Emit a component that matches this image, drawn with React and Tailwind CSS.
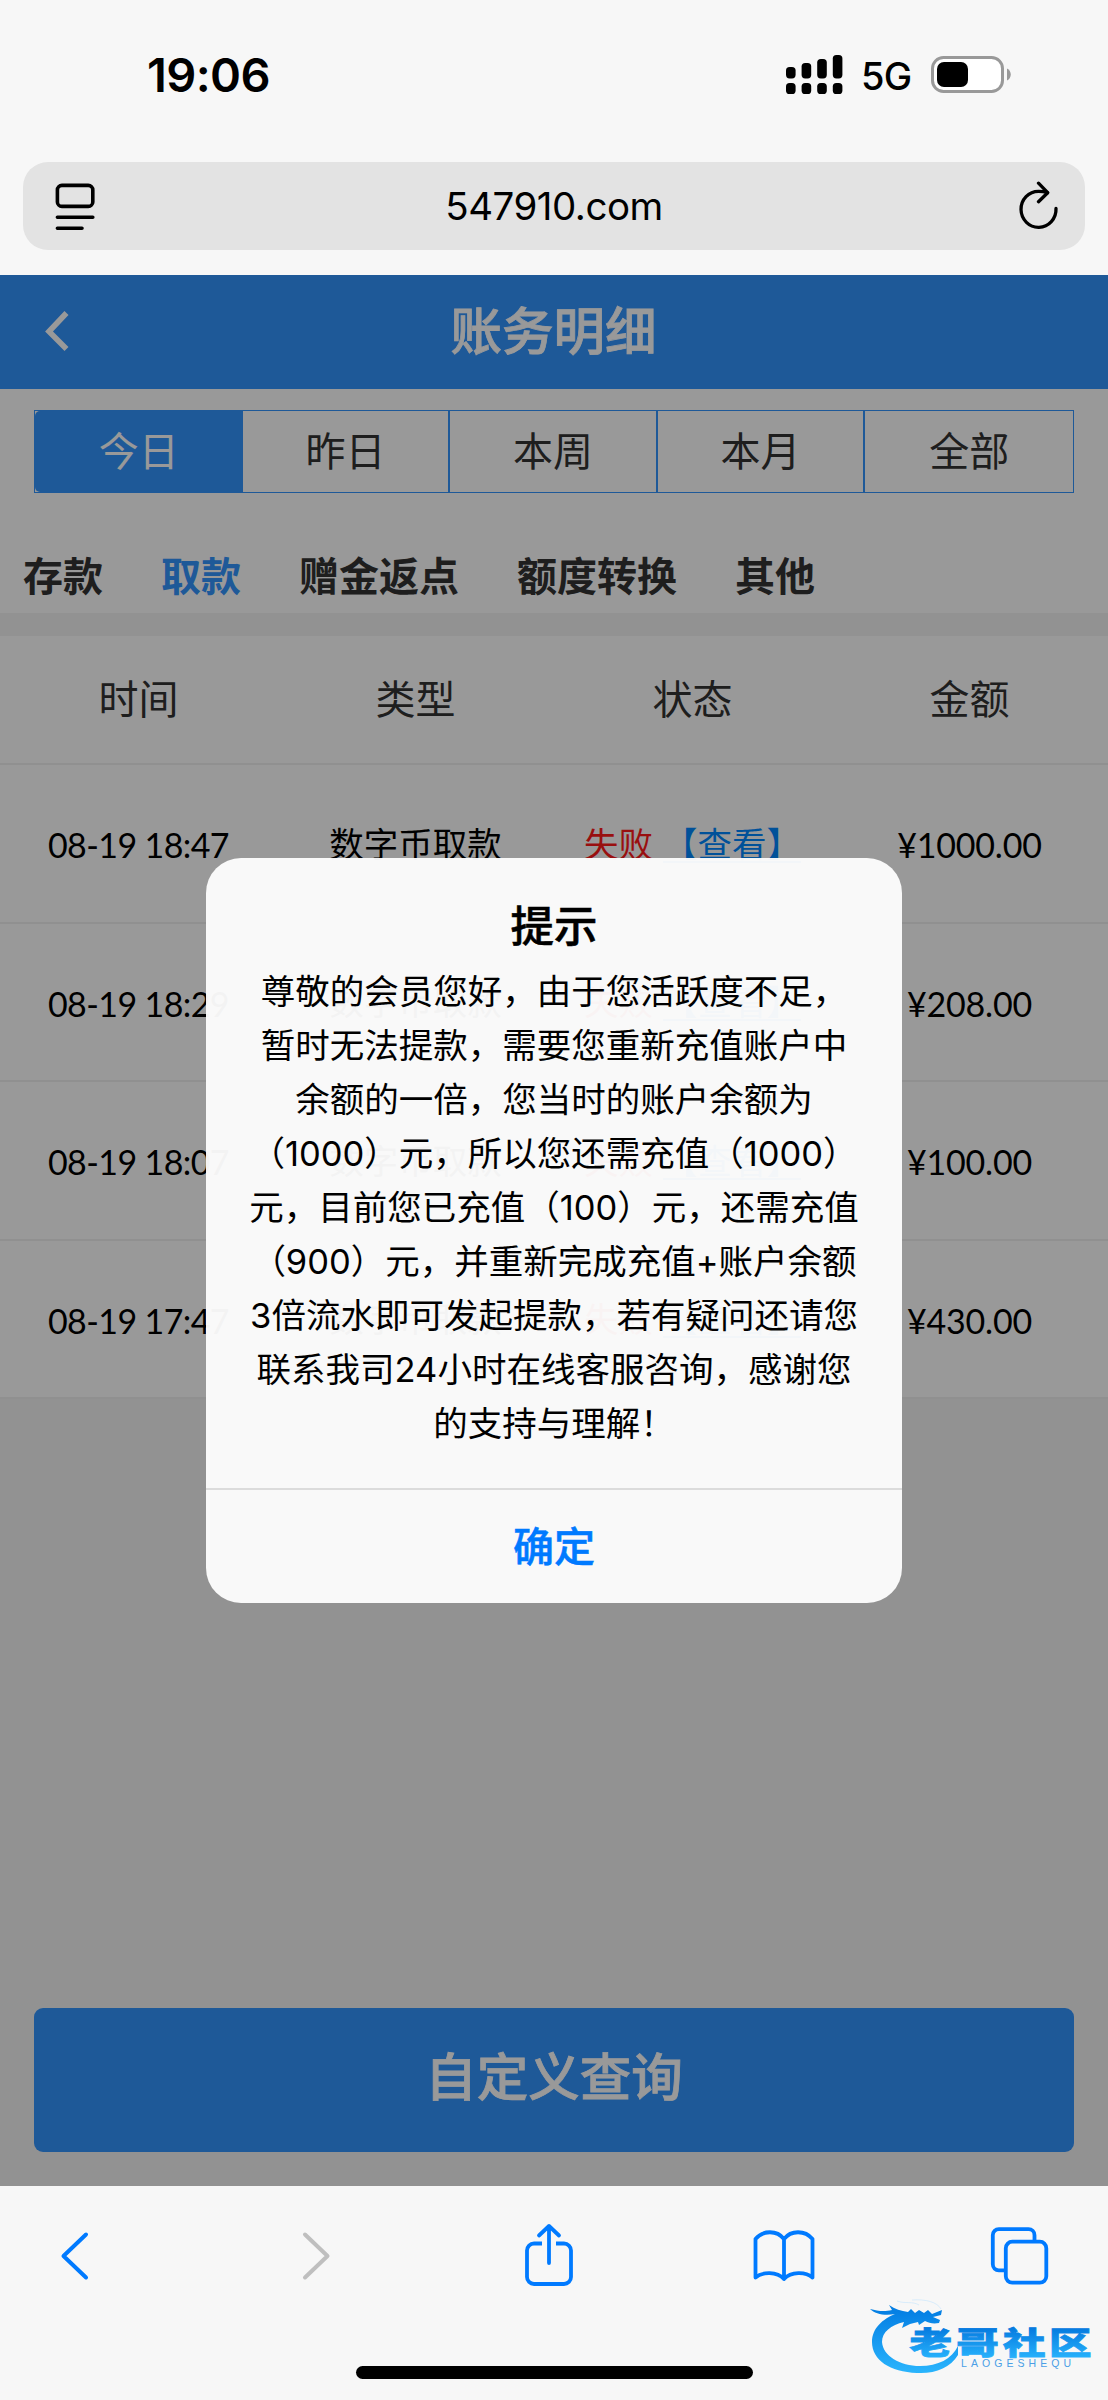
const TABS = ["今日", "昨日", "本周", "本月", "全部"];

const CATEGORIES = ["存款", "取款", "赠金返点", "额度转换", "其他"];

const COLUMNS = ["时间", "类型", "状态", "金额"];

const RECORDS = [
  { time: "08-19 18:47", type: "数字币取款", amount: "¥1000.00" },
  { time: "08-19 18:29", type: "数字币取款", amount: "¥208.00" },
  { time: "08-19 18:07", type: "数字币取款", amount: "¥100.00" },
  { time: "08-19 17:47", type: "数字币取款", amount: "¥430.00" },
];

const MESSAGE = [
  "尊敬的会员您好，由于您活跃度不足，",
  "暂时无法提款，需要您重新充值账户中",
  "余额的一倍，您当时的账户余额为",
  "（1000）元，所以您还需充值（1000）",
  "元，目前您已充值（100）元，还需充值",
  "（900）元，并重新完成充值+账户余额",
  "3倍流水即可发起提款，若有疑问还请您",
  "联系我司24小时在线客服咨询，感谢您",
  "的支持与理解！",
];

function StatusBar() {
  return (
    <div className="flex h-[162px] items-start justify-between pl-[147px] pr-[97px] pt-[45px]">
      <span className="text-[47px] leading-[60px] font-semibold tracking-[-0.6px]">19:06</span>
      <div className="flex items-start pt-[10px]">
        <svg width="57" height="40" viewBox="0 0 57 40">
          <rect x="0" y="12" width="9.6" height="11.4" rx="3.6" />
          <rect x="15.6" y="8" width="9.6" height="15.4" rx="3.6" />
          <rect x="31.2" y="4" width="9.6" height="19.4" rx="3.6" />
          <rect x="46.8" y="0" width="9.6" height="23.4" rx="3.6" />
          <rect x="0" y="28" width="9.6" height="11" rx="3.6" />
          <rect x="15.6" y="28" width="9.6" height="11" rx="3.6" />
          <rect x="31.2" y="28" width="9.6" height="11" rx="3.6" />
          <rect x="46.8" y="28" width="9.6" height="11" rx="3.6" />
        </svg>
        <span className="ml-[18px] w-[70px] text-[38px] leading-[42px] font-medium tracking-[-0.8px]">5G</span>
        <svg width="80" height="38" viewBox="0 0 80 38">
          <rect x="1.5" y="2.5" width="70" height="34" rx="11" fill="#fff" stroke="#999" strokeWidth="3" />
          <rect x="6" y="7" width="31" height="25" rx="7" />
          <path d="M76 13.5c5 2 5 10 0 12z" fill="#999" />
        </svg>
      </div>
    </div>
  );
}

function AddressBar() {
  return (
    <div className="px-[23px] pb-[25px]">
      <div className="flex h-[88px] items-center justify-between rounded-[25px] bg-[#e3e3e3] pl-[31px] pr-[26px]">
        <svg width="42" height="50" viewBox="0 0 42 50" fill="none" stroke="#000" strokeWidth="3.6" strokeLinecap="round">
          <rect x="3.4" y="4.4" width="35.4" height="21" rx="4.5" />
          <path d="M3.4 36.2h35.4M3.4 47.2h24.6" />
        </svg>
        <span className="-ml-[5px] text-[38.5px] leading-[50px] tracking-[-0.5px]">547910.com</span>
        <svg width="42" height="50" viewBox="0 0 42 50" fill="none" stroke="#000" strokeWidth="3.3" strokeLinecap="round" strokeLinejoin="round">
          <path d="M39 27.500A17.500 18 0 1 1 21.500 10.300q5 0 9 1.400" />
          <path d="M21.500 2.200l9.200 9.500-9.200 9" />
        </svg>
      </div>
    </div>
  );
}

function PageHeader() {
  return (
    <div className="flex h-[114px] items-center bg-[#3394fe] px-[44px]">
      <svg className="-mt-[3px]" width="26" height="42" viewBox="0 0 26 42" fill="none" stroke="#fff" strokeWidth="5.6">
        <path d="M22.500 3L5 21.500 22.500 39" />
      </svg>
      <h1 className="mr-[27px] -mt-[3px] flex-1 text-center text-[51.5px] leading-[60px] font-medium text-white [-webkit-text-stroke:0.8px_#fff]">
        账务明细
      </h1>
    </div>
  );
}

function RecordRow({ record }) {
  return (
    <div className="grid h-[158.5px] grid-cols-4 items-center border-b-2 border-[#f0f0f0] pt-[3px] text-center text-[34.5px] text-black">
      <span className="font-['Lato'] text-[34px] tracking-[-0.6px]">{record.time}</span>
      <span>{record.type}</span>
      <span className="whitespace-nowrap">
        <span className="mr-[10px] text-[#ff1a1a]">失败</span>
        <span className="text-[#0088ff] underline decoration-2 underline-offset-[4px]">【查看】</span>
      </span>
      <span className="font-['Lato'] text-[34px] tracking-[-0.2px]">{record.amount}</span>
    </div>
  );
}

function Dialog() {
  return (
    <div className="w-[696px] overflow-hidden rounded-[35px] bg-[#fdfdfd]/96 text-center text-black">
      <div className="h-[630px] pt-[40px]">
        <h2 className="text-[43.5px] leading-[56px] font-medium [-webkit-text-stroke:0.5px_#000]">提示</h2>
        <p className="mt-[11px] text-[34.5px] leading-[54px] whitespace-nowrap">
          {MESSAGE.map((line) => (
            <span key={line} className="block">{line}</span>
          ))}
        </p>
      </div>
      <button className="block h-[115px] w-full border-t-2 border-[#dcdcdc] pt-[2px] text-[41px] font-medium text-[#007aff] [-webkit-text-stroke:0.5px_#007aff]">
        确定
      </button>
    </div>
  );
}

function Toolbar() {
  return (
    <div className="flex h-[138px] items-start pl-[57px] pt-[34px]">
      <svg width="36" height="70" viewBox="0 0 36 70" fill="none" stroke="#007aff" strokeWidth="4" strokeLinecap="round" strokeLinejoin="round">
        <path d="M29 14.500L6.500 36 29 57.500" />
      </svg>
      <svg className="ml-[204px]" width="36" height="70" viewBox="0 0 36 70" fill="none" stroke="#bfbfbf" strokeWidth="4" strokeLinecap="round" strokeLinejoin="round">
        <path d="M8 14.500L30.500 36 8 57.500" />
      </svg>
      <svg className="ml-[189px]" width="54" height="70" viewBox="0 0 54 70" fill="none" stroke="#007aff" strokeWidth="3.800" strokeLinecap="round" strokeLinejoin="round">
        <path d="M20 23.500h-8a7 7 0 0 0-7 7V57a7 7 0 0 0 7 7h30a7 7 0 0 0 7-7V30.500a7 7 0 0 0-7-7h-8" strokeLinecap="butt" />
        <path d="M27 43V6M17 15.500L27 6l10 9.500" />
      </svg>
      <svg className="ml-[175px]" width="66" height="70" viewBox="0 0 66 70" fill="none" stroke="#007aff" strokeWidth="3.800" strokeLinecap="round" strokeLinejoin="round">
        <path d="M33 19v40M33 19C26 10 12 10 4.500 19v38.500c7-6 21.500-6 28.500 1.500 7-7.500 21.500-7.500 28.500-1.500V19C54 10 40 10 33 19z" />
      </svg>
      <svg className="ml-[171px]" width="62" height="70" viewBox="0 0 62 70" fill="none" stroke="#007aff" strokeWidth="3.800">
        <path d="M16 50.300h-5.200a6 6 0 0 1-6-6V15.200a6 6 0 0 1 6-6h29.700a6 6 0 0 1 6 6v6.500" />
        <rect x="17.800" y="21.700" width="40.500" height="41" rx="6.500" />
      </svg>
    </div>
  );
}

function CommunityLogo() {
  return (
    <svg className="absolute left-[866px] top-[2296px]" width="230" height="82" viewBox="0 0 230 82">
      <defs>
        <linearGradient id="swirl" x1="0" y1="0" x2="0" y2="1">
          <stop offset="0.1" stopColor="#0580e4" />
          <stop offset="1" stopColor="#2ab5fd" />
        </linearGradient>
        <linearGradient id="name" x1="0" y1="0" x2="0" y2="1">
          <stop offset="0.2" stopColor="#0478de" />
          <stop offset="0.9" stopColor="#27b2fc" />
        </linearGradient>
      </defs>
      {/* dragon */}
      <path
        fill="url(#swirl)"
        d="M4 13C12 15 18 16 26 14L23 9C29 13 35 15 42 16L45 13 49 17 53 14 58 17 62 14 66 18 76 14 75 19 67 21 74 24 73 27C67 28 63 27 59 25L53 29 52 26 44 28 36 32 38 26C25 29 16 36 16 46 17 60 34 70 54 70 72 70 86 63 92 50L92 59C84 72 69 78 51 77 24 76 6 64 6 46 6 32 17 23 29 18 19 20 9 18 4 13Z"
      />
      <path d="M31 5c8 3 16 0 22 4M46 4c14-1 25 2 29 9" fill="none" stroke="#cfe8fb" strokeWidth="0.800" />
      <g transform="translate(43.500 57.500) scale(1.120 0.810)">
        <text
          x="0 41.700 83.400 124.500"
          y="0"
          fontSize="38"
          fontWeight="900"
          fill="url(#name)"
          stroke="url(#name)"
          strokeWidth="1"
          fontFamily="'Noto Sans CJK SC', sans-serif"
        >
          老哥社区
        </text>
      </g>
      <text x="95" y="71" fontSize="10.500" textLength="110" fontFamily="'Liberation Sans', sans-serif" fill="#4a9fe6">
        LAOGESHEQU
      </text>
    </svg>
  );
}

export default function App() {
  return (
    <div className="relative flex h-[2400px] w-[1108px] flex-col overflow-hidden bg-[#f7f7f7] font-['Inter','Noto_Sans_CJK_SC',sans-serif] text-black">
      <StatusBar />
      <AddressBar />

      {/* Web page */}
      <main className="relative flex h-[1911px] flex-col bg-[#f3f3f3] text-[#333]">
        <PageHeader />
        <div className="h-[224px] bg-white pt-[21px]">
          <div className="mx-[34px] grid h-[83px] grid-cols-5 border border-[#3394fe]">
            {TABS.map((tab, i) => (
              <div
                key={tab}
                className={`flex items-center justify-center text-[40px] ${
                  i === 0 ? "rounded-l-[5px] bg-[#3394fe] text-white" : i === 4 ? "" : "border-r-2 border-[#3394fe]"
                }`}
              >
                {tab}
              </div>
            ))}
          </div>
          <div className="flex gap-[58px] pl-[23px] pt-[54px] text-[40px] leading-[60px] font-bold">
            {CATEGORIES.map((name, i) => (
              <span key={name} className={i === 1 ? "text-[#3394fe]" : ""}>{name}</span>
            ))}
          </div>
        </div>

        <div className="mt-[23px] bg-white">
          <div className="grid h-[129px] grid-cols-4 items-center border-b-2 border-[#f0f0f0] text-center text-[40px]">
            {COLUMNS.map((name) => (
              <span key={name}>{name}</span>
            ))}
          </div>
          {RECORDS.map((record) => (
            <RecordRow key={record.time} record={record} />
          ))}
        </div>

        <button className="mx-[34px] mt-auto mb-[34px] h-[144px] rounded-[9px] bg-[#3394fe] pb-[4px] text-[51.5px] font-medium text-white [-webkit-text-stroke:0.8px_#fff]">
          自定义查询
        </button>

        <div className="absolute inset-0 flex items-center justify-center bg-black/40">
          <Dialog />
        </div>
      </main>

      <Toolbar />
      <div className="mx-auto mt-[42px] h-[13px] w-[397px] rounded-full bg-black" />
      <CommunityLogo />
    </div>
  );
}
